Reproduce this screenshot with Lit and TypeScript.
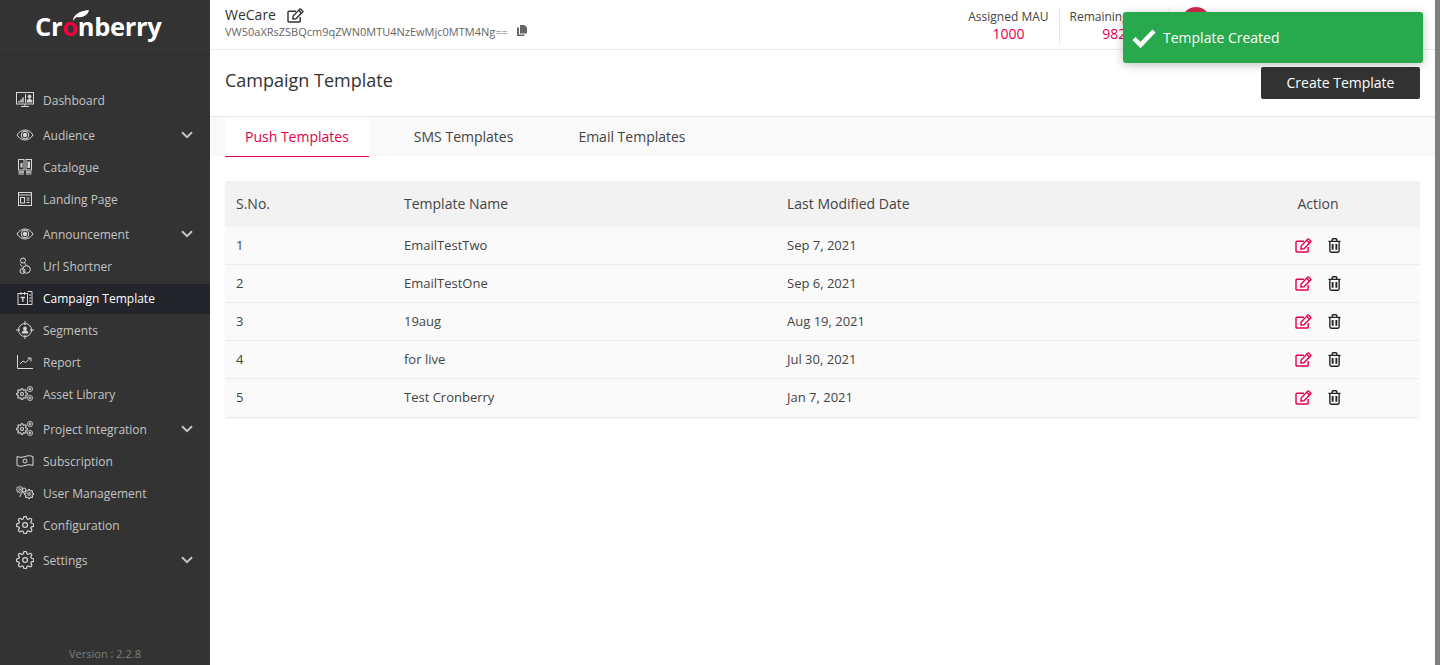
import {LitElement, css, html, svg} from 'lit';
import {customElement} from 'lit/decorators.js';

const GEAR = 'M12 15a3 3 0 1 0 0-6 3 3 0 0 0 0 6z M19.4 15a1.65 1.65 0 0 0 .33 1.82l.06.06a2 2 0 0 1 0 2.83 2 2 0 0 1-2.83 0l-.06-.06a1.65 1.65 0 0 0-1.82-.33 1.65 1.65 0 0 0-1 1.51V21a2 2 0 0 1-2 2 2 2 0 0 1-2-2v-.09A1.65 1.65 0 0 0 9 19.4a1.65 1.65 0 0 0-1.82.33l-.06.06a2 2 0 0 1-2.83 0 2 2 0 0 1 0-2.83l.06-.06a1.65 1.65 0 0 0 .33-1.82 1.65 1.65 0 0 0-1.51-1H3a2 2 0 0 1-2-2 2 2 0 0 1 2-2h.09A1.65 1.65 0 0 0 4.6 9a1.65 1.65 0 0 0-.33-1.82l-.06-.06a2 2 0 0 1 0-2.83 2 2 0 0 1 2.83 0l.06.06a1.65 1.65 0 0 0 1.82.33H9a1.65 1.65 0 0 0 1-1.51V3a2 2 0 0 1 2-2 2 2 0 0 1 2 2v.09a1.65 1.65 0 0 0 1 1.51 1.65 1.65 0 0 0 1.82-.33l.06-.06a2 2 0 0 1 2.83 0 2 2 0 0 1 0 2.83l-.06.06a1.65 1.65 0 0 0-.33 1.82V9a1.65 1.65 0 0 0 1.51 1H21a2 2 0 0 1 2 2 2 2 0 0 1-2 2h-.09a1.65 1.65 0 0 0-1.51 1z';

const ICONS: Record<string, unknown> = {
  dashboard: svg`<rect x="0.5" y="1.5" width="17" height="11.500"/><path d="M5 15.500h8M9 13v2.500"/><path d="M3 11.500V10M5 11.500V8.500M7 11.500V6.500" stroke-width="1.500"/><path d="M9.500 3v9"/><circle cx="13.500" cy="5.500" r="1.500" fill="currentColor"/><path d="M11 11c0-4 5-4 5 0z" fill="currentColor"/>`,
  eye: svg`<path d="M1 9c2-3.300 5-5 8-5s6 1.700 8 5c-2 3.300-5 5-8 5s-6-1.700-8-5z"/><circle cx="9" cy="9" r="3.800"/><circle cx="9" cy="9" r="1.800" fill="currentColor"/>`,
  catalogue: svg`<rect x="2.500" y="1.500" width="5.500" height="10.500"/><rect x="10" y="1.500" width="5.500" height="10.500"/><path d="M2.500 14h5.500M10 14h5.500" stroke-width="1.300"/><path d="M2.500 16h5.500M10 16h5.500"/><rect x="4.500" y="5" width="2" height="4.500" fill="currentColor" stroke="none"/><rect x="11.500" y="3.500" width="2.500" height="6.500" fill="currentColor" stroke="none"/>`,
  landing: svg`<rect x="2.500" y="2.500" width="13" height="13"/><path d="M2.500 5h13"/><rect x="4.500" y="7.500" width="4" height="5.500"/><path d="M10.500 8h3M10.500 10h3M10.500 12.500h3"/>`,
  url: svg`<circle cx="7" cy="3.500" r="2.500"/><path d="M5 6.500c-1 1.500 0 2.800 1.500 2.800"/><circle cx="6.500" cy="14" r="2.500"/><circle cx="10.500" cy="12.500" r="3.800"/><path d="M9 6c0 1.500 1 2.300 2.500 2.700"/>`,
  campaign: svg`<rect x="2" y="4.500" width="9.500" height="11"/><path d="M5 3v3M8.500 3v3M11.500 2.500h4.500v13h-4.500"/><path d="M4.500 8.500h4.500M6.800 8.500v4.500" stroke-width="1.300"/><path d="M13 6h2M13 9h2M13 12h2"/>`,
  segments: svg`<circle cx="9" cy="9" r="6.500"/><path d="M9 0v4M9 14v4M0 9h4M14 9h4"/><circle cx="9" cy="7.500" r="1.500" fill="currentColor"/><path d="M6 12c0-3 6-3 6 0z" fill="currentColor"/>`,
  report: svg`<path d="M1.500 2v13.500H17"/><path d="M4 11l3-3 2.500 1.500 5-4.500M11.500 5H15v3.500"/>`,
  gears: svg`<g transform="translate(0 3) scale(.5)"><path d="${GEAR}" stroke-width="2.200"/></g><g transform="translate(11 1) scale(.25)"><path d="${GEAR}" stroke-width="4"/></g><g transform="translate(11 10) scale(.25)"><path d="${GEAR}" stroke-width="4"/></g>`,
  subscription: svg`<path d="M1 4.500c3 1 5 1 8 0s5-1 8 0v9c-3-1-5-1-8 0s-5 1-8 0z"/><circle cx="9" cy="9" r="2"/>`,
  users: svg`<g transform="translate(8 5) scale(.42)"><path d="${GEAR}" stroke-width="2.400"/></g><g transform="translate(0 2) scale(.3)"><path d="${GEAR}" stroke-width="3.300"/></g><circle cx="8" cy="6" r="2"/><path d="M4 13c0-3 2-4.500 4-4.500"/>`,
  gear: svg`<g transform="translate(-.5 -.5) scale(.8)"><path d="${GEAR}" stroke-width="1.500"/></g>`,
};

const NAV = [
  {label: 'Dashboard', icon: 'dashboard'},
  {label: 'Audience', icon: 'eye', group: true},
  {label: 'Catalogue', icon: 'catalogue'},
  {label: 'Landing Page', icon: 'landing'},
  {label: 'Announcement', icon: 'eye', group: true},
  {label: 'Url Shortner', icon: 'url'},
  {label: 'Campaign Template', icon: 'campaign', active: true},
  {label: 'Segments', icon: 'segments'},
  {label: 'Report', icon: 'report'},
  {label: 'Asset Library', icon: 'gears'},
  {label: 'Project Integration', icon: 'gears', group: true},
  {label: 'Subscription', icon: 'subscription'},
  {label: 'User Management', icon: 'users'},
  {label: 'Configuration', icon: 'gear'},
  {label: 'Settings', icon: 'gear', group: true},
];

const ROWS = [
  ['1', 'EmailTestTwo', 'Sep 7, 2021'],
  ['2', 'EmailTestOne', 'Sep 6, 2021'],
  ['3', '19aug', 'Aug 19, 2021'],
  ['4', 'for live', 'Jul 30, 2021'],
  ['5', 'Test Cronberry', 'Jan 7, 2021'],
];

const editIcon = (cls: string) => html`<svg class=${cls} viewBox="0 0 18 16" fill="none" stroke="currentColor" stroke-width="1.500">
  <path d="M14 9.500v4.500a1 1 0 0 1-1 1H2a1 1 0 0 1-1-1V4.500a1 1 0 0 1 1-1h7.500"/>
  <path d="M6.500 8.500L13.500 1.200a.8.8 0 0 1 1.100 0l2 2a.8.8 0 0 1 0 1.100L9.500 11.500l-3.300.400z" stroke-linejoin="round"/>
  <path d="M12.500 2.500l3 3"/>
</svg>`;

const trashIcon = html`<svg class="trash" viewBox="0 0 14 16" fill="none" stroke="currentColor" stroke-width="1.500">
  <path d="M.5 3.500h13M4.500 3.500V1.800a1 1 0 0 1 1-1h3a1 1 0 0 1 1 1v1.700"/>
  <path d="M2 3.500v10.200a1.500 1.500 0 0 0 1.500 1.500h7a1.500 1.500 0 0 0 1.500-1.500V3.500"/>
  <path d="M5 6.500v6M9 6.500v6" stroke-width="2"/>
</svg>`;

@customElement('app-root')
export class AppRoot extends LitElement {
  static styles = css`
    :host {
      display: flex;
      height: 100vh;
      overflow: hidden;
      font-family: "Open Sans", "Noto Sans", sans-serif;
      color: #444;
      position: relative;
    }
    .side {
      width: 210px;
      flex: none;
      background: #333;
      display: flex;
      flex-direction: column;
    }
    .logo {
      height: 50px;
      box-sizing: border-box;
      border-bottom: 1px solid #3b3b3b;
      display: flex;
      padding: 10px 0 0 35px;
    }
    .word {
      position: relative;
      font-size: 25.500px;
      line-height: 32px;
      font-weight: 700;
      color: #fff;
      letter-spacing: -0.3px;
      height: 32px;
    }
    .word b { color: #f0003c; font-weight: 700; }
    .leaf {
      position: absolute;
      left: 38px;
      top: 0;
      width: 16px;
      height: 11px;
    }
    nav { padding-top: 36px; flex: 1; }
    .item {
      height: 30px;
      box-sizing: border-box;
      padding: 0 16px 2px;
      margin-bottom: 2px;
      display: flex;
      align-items: center;
      font-size: 12px;
      color: #c4c4c4;
    }
    .item.group { margin-top: 5px; }
    .item.active { background: #23252b; color: #fff; }
    .item svg.ic {
      width: 18px;
      height: 18px;
      margin-right: 9px;
      flex: none;
      fill: none;
      stroke: #d8d8d8;
      color: #d8d8d8;
      stroke-width: 1;
    }
    .item .chev { margin: 0 1px 0 auto; width: 12px; height: 8px; }
    .version {
      text-align: center;
      font-size: 11px;
      color: #7d7d7d;
      padding-bottom: 3px;
      line-height: 16px;
    }
    .main { flex: 1; min-width: 0; display: flex; flex-direction: column; background: #fff; }
    .bar { width: 5px; flex: none; background: #7f7f7f; }
    .head {
      height: 50px;
      box-sizing: border-box;
      border-bottom: 1px solid #e8e8e8;
      display: flex;
      align-items: center;
      padding: 0 225px 0 15px;
    }
    .project { line-height: 1; align-self: flex-start; padding-top: 5px; }
    .pname { font-size: 14px; color: #333; display: flex; align-items: center; gap: 11px; height: 20px; }
    .pname svg { width: 17px; height: 15px; color: #333; }
    .pid { font-size: 11px; color: #666; display: flex; align-items: center; gap: 9px; height: 14px; margin-top: -1px; }
    .pid svg { width: 10px; height: 11px; fill: #666; margin-top: -2px; }
    .stats { margin-left: auto; display: flex; align-items: center; }
    .stat {
      padding: 2px 10px 0;
      height: 38px;
      box-sizing: border-box;
      margin-top: 2px;
      border-right: 1px solid #e8e8e8;
      text-align: center;
      font-size: 12px;
      line-height: 16px;
      color: #444;
    }
    .stat strong { display: block; font-size: 14px; font-weight: 400; color: #e6004c; line-height: 18px; }
    .avatar {
      width: 28px;
      height: 28px;
      border-radius: 50%;
      background: #cf2a50;
      margin: -8px 0 0 12px;
    }
    .title {
      display: flex;
      justify-content: space-between;
      padding: 16px 15px 17px;
    }
    h1 { margin: 0; font-size: 18px; font-weight: 400; color: #333; line-height: 28px; }
    .btn {
      width: 159px;
      height: 32px;
      margin-top: 1px;
      box-sizing: border-box;
      border: 0;
      padding: 0 0 2px;
      border-radius: 2px;
      background: #333;
      color: #fff;
      font: 500 14px "Open Sans", sans-serif;
    }
    .tabs {
      display: flex;
      gap: 25px;
      height: 40px;
      box-sizing: border-box;
      background: #f9f9f9;
      border-top: 1px solid #e8e8e8;
      padding: 0 15px;
    }
    .tab {
      padding: 0 20px;
      font-size: 14px;
      line-height: 39px;
      color: #444;
    }
    .tab.on {
      background: #fff;
      color: #e6004c;
      border-bottom: 1px solid #e6004c;
      border-radius: 3px 3px 0 0;
      height: 40px;
      box-sizing: border-box;
    }
    .wrap { padding: 25px 15px 0; }
    table {
      width: 100%;
      border-collapse: separate;
      border-spacing: 0;
      table-layout: fixed;
      box-shadow: 0 2px 2px -1px rgba(0, 0, 0, .12);
    }
    th {
      height: 46px;
      padding: 0 11px 2px;
      box-sizing: border-box;
      background: #f2f2f2;
      font-size: 14px;
      font-weight: 400;
      text-align: left;
      color: #444;
    }
    td {
      height: 38px;
      box-sizing: border-box;
      padding: 0 11px 1px;
      background: #fafafa;
      border-bottom: 1px solid #ececec;
      font-size: 13px;
      color: #444;
    }
    tr:last-child td { border-bottom: 0; padding-bottom: 2px; }
    .c-act { text-align: center; }
    .acts { display: flex; justify-content: center; align-items: center; gap: 16px; }
    .act { width: 17px; height: 15px; display: block; color: #e6004c; }
    .trash { width: 13px; height: 15px; display: block; color: #222; }
    .toast {
      position: absolute;
      left: 1123px;
      top: 12px;
      width: 300px;
      height: 51px;
      background: #28a94e;
      border-radius: 3px;
      box-shadow: 0 2px 10px rgba(0, 0, 0, .25);
      display: flex;
      align-items: center;
      gap: 7px;
      padding-left: 9px;
      box-sizing: border-box;
      color: #fff;
      font-size: 14px;
    }
    .toast svg { width: 24px; height: 20px; }
  `;

  render() {
    return html`
      <aside class="side">
        <div class="logo">
          <div class="word">Cr<b>o</b>nberry<svg class="leaf" viewBox="0 0 16 11"><path d="M0 11C0 5 6 1 16 0c-1 5-6 8-12 7-2 1-3 2-4 4z" fill="#fff"/></svg></div>
        </div>
        <nav>
          ${NAV.map(n => html`
            <div class="item ${n.group ? 'group' : ''} ${n.active ? 'active' : ''}">
              <svg class="ic" viewBox="0 0 18 18">${ICONS[n.icon]}</svg>
              <span>${n.label}</span>
              ${n.group ? html`<svg class="chev" viewBox="0 0 12 8" fill="none" stroke="#c4c4c4" stroke-width="2"><path d="M1 1.200l5 5 5-5"/></svg>` : ''}
            </div>`)}
        </nav>
        <div class="version">Version : 2.2.8</div>
      </aside>
      <div class="main">
        <header class="head">
          <div class="project">
            <div class="pname">WeCare ${editIcon('')}</div>
            <div class="pid">VW50aXRsZSBQcm9qZWN0MTU4NzEwMjc0MTM4Ng==
              <svg viewBox="0 0 10 11"><path d="M3 0h4.500L10 2.500V8.500H3z M0 2.500h2V9.500h5.500V11H0z"/></svg>
            </div>
          </div>
          <div class="stats">
            <div class="stat">Assigned MAU<strong>1000</strong></div>
            <div class="stat">Remaining MAU<strong>982</strong></div>
            <div class="avatar"></div>
          </div>
        </header>
        <div class="title">
          <h1>Campaign Template</h1>
          <button class="btn">Create Template</button>
        </div>
        <div class="tabs">
          <div class="tab on">Push Templates</div>
          <div class="tab">SMS Templates</div>
          <div class="tab">Email Templates</div>
        </div>
        <div class="wrap">
          <table>
            <colgroup>
              <col style="width:168px"><col style="width:383px"><col style="width:440px"><col>
            </colgroup>
            <thead>
              <tr><th>S.No.</th><th>Template Name</th><th>Last Modified Date</th><th class="c-act">Action</th></tr>
            </thead>
            <tbody>
              ${ROWS.map(r => html`<tr>
                <td>${r[0]}</td><td>${r[1]}</td><td>${r[2]}</td>
                <td><div class="acts">${editIcon('act')}${trashIcon}</div></td>
              </tr>`)}
            </tbody>
          </table>
        </div>
      </div>
      <div class="bar"></div>
      <div class="toast">
        <svg viewBox="0 0 24 20"><path d="M2 10.500l6.500 6.500L22 3" fill="none" stroke="#fff" stroke-width="4.500"/></svg>
        Template Created
      </div>
    `;
  }
}
